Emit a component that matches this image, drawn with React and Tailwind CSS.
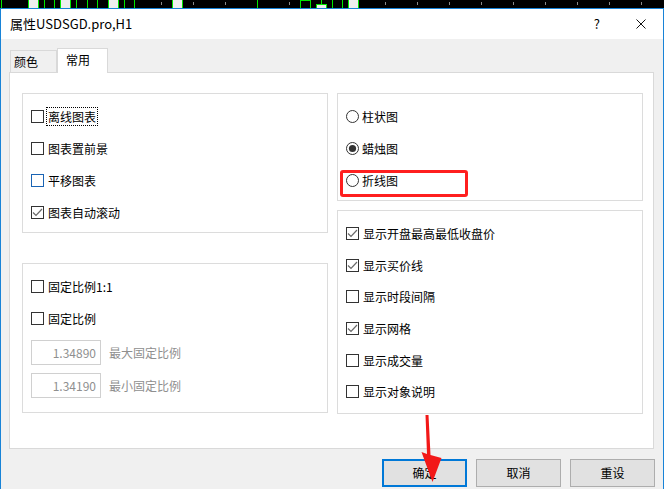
import React from "react";

const FONT = "font-['Noto_Sans_CJK_SC','Microsoft_YaHei',sans-serif]";

function Strip() {
  const greens = [1, 44, 54, 76, 87, 97, 124, 134, 257, 332, 342];
  const candles = [28, 60, 108, 172, 348];
  const ticks = [161, 193, 225, 289, 385, 417, 449, 481, 513, 545, 577, 609, 641];
  return (
    <svg width="664" height="8" className="block shrink-0">
      <rect x="0" y="0" width="664" height="8" fill="#000" />
      {greens.map((x) => (
        <line key={x} x1={x + 0.5} y1="0" x2={x + 0.5} y2="8" stroke="#00e600" strokeWidth="1" />
      ))}
      {candles.map((x) => (
        <rect key={x} x={x + 0.5} y="-1" width="10" height="10" fill="#eeeeee" stroke="#00e600" strokeWidth="1" />
      ))}
      {ticks.map((x) => (
        <line key={x} x1={x + 0.5} y1="2" x2={x + 0.5} y2="5" stroke="#8a8a8a" strokeWidth="1" />
      ))}
      <rect x="300.5" y="0.5" width="10" height="9" fill="none" stroke="#00e600" strokeWidth="1" />
      <line x1="321.5" y1="0" x2="321.5" y2="4" stroke="#00e600" strokeWidth="1" />
      <rect x="316.5" y="4.5" width="10" height="5" fill="#eeeeee" stroke="#00e600" strokeWidth="1" />
    </svg>
  );
}

function Box({ checked, blue }) {
  return (
    <svg width="13" height="13" className="block shrink-0">
      <rect x="0.5" y="0.5" width="12" height="12" fill="#fff" stroke={blue ? "#1a64b4" : "#333"} strokeWidth="1" />
      {checked && <path d="M2 6.5 L5 9.5 L11 3" fill="none" stroke="#6a6a6a" strokeWidth="1.2" />}
    </svg>
  );
}

function Radio({ checked }) {
  return (
    <svg width="13" height="13" className="block shrink-0">
      <circle cx="6.5" cy="6.5" r="6" fill="#fff" stroke="#333" strokeWidth="1" />
      {checked && <circle cx="6.5" cy="6.5" r="3.6" fill="#333" />}
    </svg>
  );
}

function CheckRow({ label, checked, blue, focus, h = "h-[32px]" }) {
  return (
    <div className={`flex items-center ${h}`}>
      <Box checked={checked} blue={blue} />
      <span
        className={`ml-[2px] px-[1px] leading-[17px] text-[12px] text-black border ${
          focus ? "border-dotted border-black" : "border-transparent"
        }`}
      >
        {label}
      </span>
    </div>
  );
}

function RadioRow({ label, checked }) {
  return (
    <div className="flex items-center h-[32px]">
      <Radio checked={checked} />
      <span className="ml-[3px] text-[12px] leading-[17px] text-black">{label}</span>
    </div>
  );
}

function NumRow({ value, label }) {
  return (
    <div className="flex items-center">
      <div className="w-[70px] h-[25px] border border-[#d0d0d0] bg-white flex items-center justify-end pr-[4px] text-[12px] text-[#8f8f8f]">
        {value}
      </div>
      <span className="ml-[8px] text-[12px] text-[#8f8f8f]">{label}</span>
    </div>
  );
}

function Btn({ children, primary }) {
  return (
    <div
      className={`w-[85px] h-[28px] flex items-center justify-center text-[12px] text-black bg-[#e1e1e1] ${
        primary ? "border-2 border-[#0078d7]" : "border border-[#adadad]"
      }`}
    >
      {children}
    </div>
  );
}

export default function App() {
  return (
    <div className={`relative w-[664px] h-[489px] bg-black overflow-hidden flex flex-col ${FONT}`}>
      <Strip />
      <div className="flex-1 flex flex-col border-x border-t border-[#1883d7] bg-[#f0f0f0]">
        {/* title bar */}
        <div className="h-[30px] bg-white flex items-center pl-[9px] shrink-0">
          <span className="text-[13px] text-black">属性USDSGD.pro,H1</span>
          <span className="ml-auto text-[13px] text-black mr-[36px]">?</span>
          <svg width="10" height="10" className="mr-[17px]">
            <path d="M0.5 0.5 L9.5 9.5 M9.5 0.5 L0.5 9.5" stroke="#111" strokeWidth="1" />
          </svg>
        </div>
        {/* body */}
        <div className="flex flex-col pl-[8px] pt-[9px]">
          {/* tabs */}
          <div className="flex items-end h-[24px]">
            <div className="ml-[1px] w-[47px] h-[22px] border border-b-0 border-[#d9d9d9] bg-[#f0f0f0] flex items-center pl-[3px] text-[12px] text-black">
              颜色
            </div>
            <div className="relative z-10 -mb-[1px] w-[51px] h-[25px] border border-b-0 border-[#d9d9d9] bg-white flex items-start pt-[2px] pl-[8px] text-[12px] text-black">
              常用
            </div>
          </div>
          {/* panel */}
          <div className="w-[645px] h-[377px] border border-[#d9d9d9] bg-white pt-[20px] pl-[12px] flex gap-[9px]">
            {/* left column */}
            <div className="w-[306px] flex flex-col">
              <div className="h-[140px] border border-[#dcdcdc] pt-[6px] pl-[8px]">
                <CheckRow label="离线图表" focus />
                <CheckRow label="图表置前景" />
                <CheckRow label="平移图表" blue />
                <CheckRow label="图表自动滚动" checked />
              </div>
              <div className="mt-[30px] h-[150px] border border-[#dcdcdc] pt-[6px] pl-[8px]">
                <CheckRow label="固定比例1:1" />
                <CheckRow label="固定比例" />
                <div className="mt-[6px] flex flex-col gap-[8px]">
                  <NumRow value="1.34890" label="最大固定比例" />
                  <NumRow value="1.34190" label="最小固定比例" />
                </div>
              </div>
            </div>
            {/* right column */}
            <div className="w-[306px] flex flex-col">
              <div className="relative h-[108px] border border-[#dcdcdc] pt-[6px] pl-[8px]">
                <RadioRow label="柱状图" />
                <RadioRow label="蜡烛图" checked />
                <RadioRow label="折线图" />
                <div className="absolute left-[2px] top-[76px] w-[128px] h-[27px] border-[3px] border-[#ff1f1f] rounded-[3px]" />
              </div>
              <div className="mt-[9px] h-[204px] border border-[#dcdcdc] pt-[7px] pl-[8px]">
                <CheckRow h="h-[31.6px]" label="显示开盘最高最低收盘价" checked />
                <CheckRow h="h-[31.6px]" label="显示买价线" checked />
                <CheckRow h="h-[31.6px]" label="显示时段间隔" />
                <CheckRow h="h-[31.6px]" label="显示网格" checked />
                <CheckRow h="h-[31.6px]" label="显示成交量" />
                <CheckRow h="h-[31.6px]" label="显示对象说明" />
              </div>
            </div>
          </div>
          {/* buttons */}
          <div className="mt-[10px] ml-[373px] flex gap-[9px]">
            <Btn primary>确定</Btn>
            <Btn>取消</Btn>
            <Btn>重设</Btn>
          </div>
        </div>
      </div>
      {/* red arrow annotation */}
      <svg width="664" height="489" className="absolute left-0 top-0 pointer-events-none">
        <polygon points="425.5,415 428.5,415 430.5,455 441.5,458 432.5,482 421.5,452 427,454" fill="#f21818" />
      </svg>
    </div>
  );
}
